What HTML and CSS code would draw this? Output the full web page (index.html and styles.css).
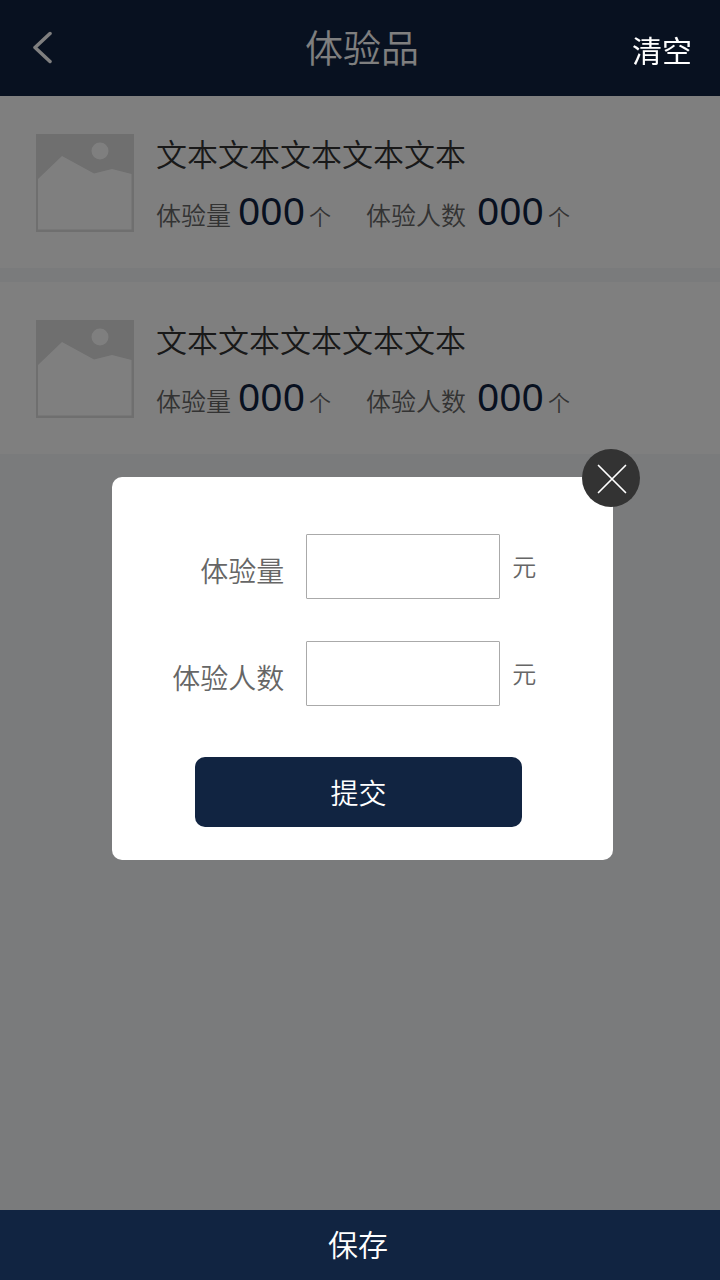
FILE: index.html
```
<!DOCTYPE html>
<html lang="zh-CN">
<head>
<meta charset="utf-8">
<meta name="viewport" content="width=device-width, initial-scale=1">
<title>体验品</title>
<link rel="stylesheet" href="styles.css">
</head>
<body>
<div class="page">
  <header class="topbar">
    <button class="back" type="button" aria-label="返回">
      <svg width="20" height="34" viewBox="0 0 20 34" fill="none" stroke="#fff" stroke-width="3.500" stroke-linecap="round" stroke-linejoin="round"><path d="M18 2.500 3 16.500 18 30.500"/></svg>
    </button>
    <h1 class="title">体验品</h1>
    <button class="clear" type="button">清空</button>
  </header>

  <main class="list">
    <article class="item">
      <svg class="thumb" viewBox="0 0 98 98"><path fill="#dedede" d="M0 0h98v98H0z"/><path fill="#fff" d="M2 45 26 22 58 39.500 76 35 95.500 40V95.500H2z"/><circle cx="64" cy="17" r="8.500" fill="#fff"/></svg>
      <div class="info">
        <h2 class="name">文本文本文本文本文本</h2>
        <div class="stats">
          <p class="stat"><span class="label">体验量</span><span class="num">000</span><span class="unit">个</span></p>
          <p class="stat"><span class="label">体验人数</span><span class="num num-wide">000</span><span class="unit">个</span></p>
        </div>
      </div>
    </article>
    <article class="item">
      <svg class="thumb" viewBox="0 0 98 98"><path fill="#dedede" d="M0 0h98v98H0z"/><path fill="#fff" d="M2 45 26 22 58 39.500 76 35 95.500 40V95.500H2z"/><circle cx="64" cy="17" r="8.500" fill="#fff"/></svg>
      <div class="info">
        <h2 class="name">文本文本文本文本文本</h2>
        <div class="stats">
          <p class="stat"><span class="label">体验量</span><span class="num">000</span><span class="unit">个</span></p>
          <p class="stat"><span class="label">体验人数</span><span class="num num-wide">000</span><span class="unit">个</span></p>
        </div>
      </div>
    </article>
  </main>

  <button class="save" type="button">保存</button>
</div>

<div class="overlay">
  <form class="dialog" role="dialog" aria-label="体验品">
    <button class="close" type="button" aria-label="关闭">
      <svg width="32" height="32" viewBox="0 0 32 32" stroke="#fff" stroke-width="1.700" stroke-linecap="round"><path d="M3.500 3.500l27 27M30.500 3.500l-27 27"/></svg>
    </button>
    <div class="field">
      <label class="field-label" for="amount">体验量</label>
      <input class="field-input" id="amount" type="text">
      <span class="field-unit">元</span>
    </div>
    <div class="field">
      <label class="field-label" for="people">体验人数</label>
      <input class="field-input" id="people" type="text">
      <span class="field-unit">元</span>
    </div>
    <button class="submit" type="button">提交</button>
  </form>
</div>
</body>
</html>
```
FILE: styles.css
```
* {
  box-sizing: border-box;
}

body {
  margin: 0;
  background: #f4f6f9;
  font-family: "Noto Sans", "Noto Sans CJK SC", sans-serif;
  font-weight: 350;
  color: #333;
}

button,
input {
  font-family: inherit;
  font-weight: inherit;
}

button {
  border: 0;
  padding: 0;
  background: none;
  color: #fff;
  cursor: pointer;
}

h1,
h2,
p {
  margin: 0;
  font-weight: inherit;
}

.page {
  display: flex;
  flex-direction: column;
  min-height: 100vh;
}

.topbar {
  display: grid;
  grid-template-columns: 1fr auto 1fr;
  align-items: center;
  height: 96px;
  padding: 0 28px 0 32px;
  background: #112341;
}

.back {
  justify-self: start;
  display: flex;
}

.title {
  padding-bottom: 2px;
  font-size: 38px;
  line-height: 56px;
  color: #fff;
}

.clear {
  position: relative;
  z-index: 2;
  justify-self: end;
  padding-top: 6px;
  font-size: 30px;
  font-weight: 400;
  line-height: 44px;
}

.list {
  flex: 1;
  display: flex;
  flex-direction: column;
  gap: 14px;
}

.item {
  display: flex;
  gap: 22px;
  padding: 38px 36px 32px;
  background: #fff;
}

.thumb {
  flex: none;
  width: 98px;
  height: 98px;
}

.name {
  font-size: 31px;
  line-height: 40px;
}

.stats {
  display: flex;
  gap: 35px;
  margin-top: 16px;
}

.stat {
  display: flex;
  align-items: baseline;
  line-height: 40px;
  color: #666;
}

.label {
  font-size: 25px;
}

.num {
  margin: 0 4px 0 7px;
  font-size: 39px;
  font-weight: 400;
  color: #112341;
}

.num-wide {
  margin-left: 11px;
}

.unit {
  font-size: 22px;
}

.save {
  position: relative;
  z-index: 2;
  height: 70px;
  padding: 0 4px 4px 0;
  background: #112441;
  font-size: 30px;
}

.overlay {
  position: fixed;
  inset: 0;
  z-index: 1;
  display: grid;
  place-items: center;
  padding: 57px 0 0 5px;
  background: rgba(0, 0, 0, 0.5);
}

.dialog {
  position: relative;
  display: flex;
  flex-direction: column;
  gap: 42px;
  width: 70%;
  min-width: 480px;
  max-width: 501px;
  padding: 57px 28px 33px;
  border-radius: 10px;
  background: #fff;
}

.close {
  position: absolute;
  top: -28px;
  right: -27px;
  display: flex;
  align-items: center;
  justify-content: center;
  width: 58px;
  height: 58px;
  border-radius: 50%;
  background: #333;
}

.field {
  display: grid;
  grid-template-columns: 144px 194px 1fr;
  align-items: center;
  column-gap: 22px;
  color: #666;
}

.field-label {
  padding-top: 8px;
  font-size: 28px;
  line-height: 40px;
  text-align: right;
}

.field-input {
  width: 100%;
  height: 65px;
  padding: 0 12px;
  border: 1px solid #aaa;
  border-radius: 1px;
  background: #fff;
  font-size: 28px;
}

.field-unit {
  margin-left: -10px;
  font-size: 24px;
  line-height: 36px;
}

.submit {
  align-self: center;
  width: 327px;
  height: 70px;
  margin: 9px 8px 0 0;
  border-radius: 10px;
  background: #112441;
  font-size: 28px;
}
```
